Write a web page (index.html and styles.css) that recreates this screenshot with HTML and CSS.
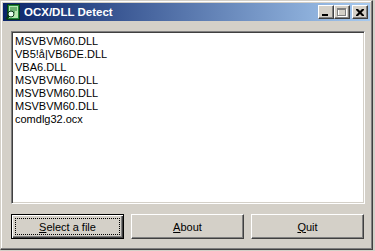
FILE: index.html
```html
<!DOCTYPE html>
<html lang="en">
<head>
    <meta charset="UTF-8">
    <title>OCX/DLL Detect</title>
    <link rel="stylesheet" href="styles.css">
</head>
<body>

    <div class="window">
        <div class="titlebar">
            <svg class="app-icon" width="16" height="16" viewBox="0 0 16 16">
                <rect x="2.5" y="0.5" width="12" height="15" fill="#1f8a3c" stroke="#0b3a18"/>
                <rect x="4" y="2" width="9" height="12" fill="#b8e8b0"/>
                <path d="M5 4h7M5 6h7M5 8h5M5 10h4" stroke="#1f7a30" stroke-width="1"/>
                <circle cx="6" cy="10" r="3" fill="#e8fff0" stroke="#0b3a18"/>
                <path d="M4 12 L1 15" stroke="#0b3a18" stroke-width="2"/>
            </svg>
            <span class="title">OCX/DLL Detect</span>
            <div class="caption-btns">
                <span class="cbtn">
                    <svg width="8" height="7" viewBox="0 0 8 7"><rect x="0" y="5" width="6" height="2" fill="#000"/></svg>
                </span>
                <span class="cbtn disabled">
                    <svg width="10" height="9" viewBox="0 0 10 9">
                        <rect x="1.5" y="1.5" width="8" height="7" fill="none" stroke="#fff"/>
                        <rect x="0.5" y="0.5" width="8" height="7" fill="none" stroke="#808080"/>
                        <rect x="0" y="1" width="9" height="1" fill="#808080"/>
                    </svg>
                </span>
                <span class="cbtn close">
                    <svg width="8" height="7" viewBox="0 0 8 7">
                        <path d="M0 0h2l2 2 2-2h2v1L5.5 3.5 8 6v1H6L4 5 2 7H0V6l2.5-2.5L0 1z" fill="#000"/>
                    </svg>
                </span>
            </div>
        </div>

        <div class="client">
            <div class="listbox">
                <div class="item">MSVBVM60.DLL</div>
                <div class="item">VB5!å|VB6DE.DLL</div>
                <div class="item">VBA6.DLL</div>
                <div class="item">MSVBVM60.DLL</div>
                <div class="item">MSVBVM60.DLL</div>
                <div class="item">MSVBVM60.DLL</div>
                <div class="item">comdlg32.ocx</div>
            </div>

            <div class="buttons">
                <button class="btn default"><span class="focus"><u>S</u>elect a file</span></button>
                <button class="btn"><span class="focus"><u>A</u>bout</span></button>
                <button class="btn"><span class="focus"><u>Q</u>uit</span></button>
            </div>
        </div>
    </div>

</body>
</html>
```

FILE: styles.css
```css
body {
    margin: 0;
    padding: 0;
    background: #D4D0C8;
    font-family: 'Liberation Sans', Arial, sans-serif;
}

.window {
    width: 367px;
    height: 244px;
    background: #D4D0C8;
    border-top: 1px solid #D4D0C8;
    border-left: 1px solid #D4D0C8;
    border-right: 1px solid #404040;
    border-bottom: 1px solid #404040;
    box-shadow: inset -1px -1px 0 #808080, inset 1px 1px 0 #fff;
    padding: 2px;
}

.titlebar {
    height: 18px;
    display: flex;
    align-items: center;
    padding: 0 2px;
    background: linear-gradient(to right, #0A246A, #A6CAF0);
    color: #fff;
}

.app-icon {
    flex: none;
    margin-right: 3px;
}

.title {
    font-weight: bold;
    font-size: 11.5px;
    flex: 1;
}

.caption-btns {
    display: flex;
    align-items: center;
}

.cbtn {
    width: 16px;
    height: 14px;
    box-sizing: border-box;
    background: #D4D0C8;
    border-top: 1px solid #fff;
    border-left: 1px solid #fff;
    border-right: 1px solid #404040;
    border-bottom: 1px solid #404040;
    box-shadow: inset -1px -1px 0 #808080;
    display: flex;
    align-items: center;
    justify-content: center;
}

.cbtn.close {
    margin-left: 2px;
}

.client {
    padding: 10px 0 0 8px;
}

.listbox {
    box-sizing: border-box;
    width: 354px;
    height: 173px;
    background: #fff;
    border-top: 1px solid #808080;
    border-left: 1px solid #808080;
    border-right: 1px solid #fff;
    border-bottom: 1px solid #fff;
    box-shadow: inset 1px 1px 0 #404040, inset -1px -1px 0 #D4D0C8;
    padding: 3px;
    font-size: 11px;
    line-height: 13px;
    color: #000;
}

.buttons {
    display: flex;
    gap: 7px;
    margin-top: 10px;
}

.btn {
    width: 113px;
    height: 25px;
    padding: 0;
    background: #D4D0C8;
    border-top: 1px solid #fff;
    border-left: 1px solid #fff;
    border-right: 1px solid #404040;
    border-bottom: 1px solid #404040;
    box-shadow: inset -1px -1px 0 #808080;
    font-family: 'Liberation Sans', Arial, sans-serif;
    font-size: 11px;
    color: #000;
    display: flex;
}

.btn .focus {
    flex: 1;
    display: flex;
    align-items: center;
    justify-content: center;
    margin: 3px;
    border: 1px solid transparent;
}

.btn.default {
    border: 1px solid #000;
    box-shadow: inset 1px 1px 0 #fff, inset -1px -1px 0 #404040, inset -2px -2px 0 #808080;
}

.btn.default .focus {
    border: 1px dotted #000;
}
```
